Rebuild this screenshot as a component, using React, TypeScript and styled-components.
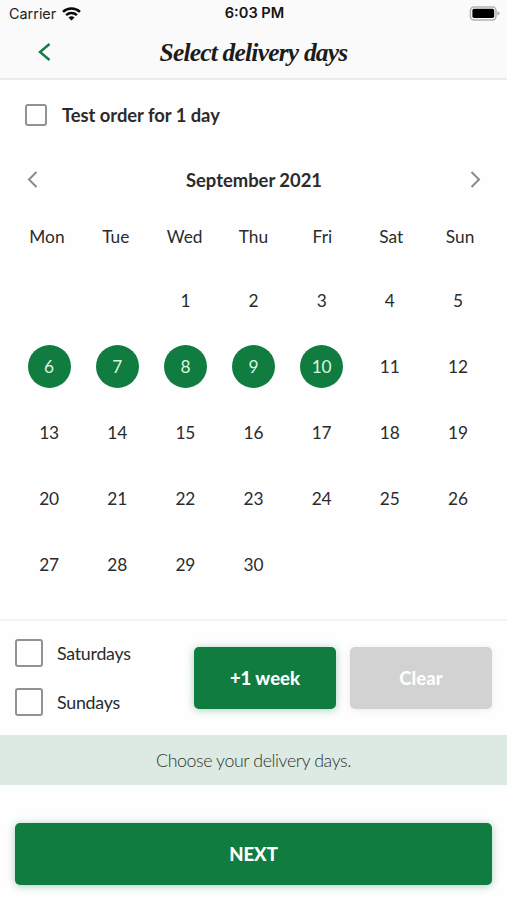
import React from "react";
import styled, { createGlobalStyle } from "styled-components";

const GlobalStyle = createGlobalStyle`
  * { box-sizing: border-box; }
  body { margin: 0; background: #fefefe; }
  button { font: inherit; border: 0; padding: 0; background: none; }
`;

const GREEN = "#107c3f";

const Screen = styled.div`
  width: 507px;
  height: 900px;
  display: flex;
  flex-direction: column;
  overflow: hidden;
  background: #fefefe;
  color: #2b2b2b;
  font-family: Lato, sans-serif;
  font-size: 18px;
`;

const Header = styled.header`
  height: 80px;
  flex: none;
  background: #fafafa;
  border-bottom: 2px solid #ebebeb;
`;

const StatusBar = styled.div`
  height: 27px;
  display: grid;
  grid-template-columns: 1fr auto 1fr;
  align-items: center;
  padding: 0 7px 0 9px;
  font: 14.4px/27px Inter, sans-serif;
  color: #222;
`;

const Carrier = styled.div`
  height: 27px;
  display: flex;
  align-items: center;
  gap: 6px;
`;

const Clock = styled.div`
  height: 27px;
  font-weight: 600;
  font-size: 14.6px;
  color: #151515;
`;

const BatteryIcon = styled.svg`
  justify-self: end;
`;

const NavBar = styled.div`
  height: 50px;
  display: grid;
  grid-template-columns: 60px 1fr 60px;
  align-items: center;
`;

const BackButton = styled.button`
  display: flex;
  padding-left: 38px;
`;

const Title = styled.h1`
  margin: 0;
  text-align: center;
  white-space: nowrap;
  font: italic 700 25.5px/49px "Liberation Serif", serif;
  letter-spacing: -0.8px;
  color: #1c1c1c;
`;

const TestOrder = styled.label`
  height: 70px;
  display: flex;
  align-items: center;
  gap: 15px;
  padding-left: 25px;
  font-weight: 700;
  font-size: 18.4px;
  letter-spacing: -0.04px;
`;

const Box = styled.span<{ $size: number }>`
  width: ${(p) => p.$size}px;
  height: ${(p) => p.$size}px;
  flex: none;
  border: 2px solid #929292;
  border-radius: 3px;
`;

const MonthBar = styled.div`
  height: 59px;
  display: flex;
  align-items: center;
  justify-content: space-between;
  padding: 0 26px 0 27px;
`;

const MonthName = styled.h2`
  margin: 0;
  font-size: 18.4px;
  font-weight: 700;
`;

const ArrowButton = styled.button`
  display: flex;
`;

const Weekdays = styled.div`
  height: 58px;
  display: grid;
  grid-template-columns: repeat(7, 1fr);
  align-items: start;
  justify-items: center;
  padding: 0 12.5px;
  font-size: 17.3px;
  line-height: 55px;
`;

const Days = styled.div`
  height: 352px;
  flex: none;
  display: grid;
  grid-template-columns: repeat(7, 1fr);
  grid-auto-rows: 66.2px;
  align-items: center;
  justify-items: center;
  padding: 0 15px;
`;

const Day = styled.span<{ $selected: boolean; $column?: number }>`
  width: 43px;
  height: 43px;
  display: flex;
  align-items: center;
  justify-content: center;
  border-radius: 50%;
  font-size: 17.3px;
  letter-spacing: -0.1px;
  grid-column: ${(p) => p.$column ?? "auto"};
  color: ${(p) => (p.$selected ? "#dcf5e0" : "inherit")};
  background: ${(p) => (p.$selected ? GREEN : "transparent")};
`;

const Controls = styled.section`
  height: 116px;
  flex: none;
  display: grid;
  grid-template-columns: 165px 142px 142px;
  justify-content: space-between;
  align-items: center;
  padding: 0 15px;
  border-top: 2px solid #f3f3f3;
`;

const WeekendOptions = styled.div`
  display: flex;
  flex-direction: column;
  gap: 21px;
  padding-bottom: 2px;
`;

const Option = styled.label`
  height: 28px;
  display: flex;
  align-items: center;
  gap: 14px;
  font-size: 17.8px;
  letter-spacing: -0.25px;
`;

const Button = styled.button<{ $disabled?: boolean }>`
  width: 100%;
  height: 62px;
  border-radius: 5px;
  font-family: Lato, sans-serif;
  font-size: 18.5px;
  font-weight: 900;
  color: #fdfdfd;
  background: ${(p) => (p.$disabled ? "#d2d2d2" : GREEN)};
  box-shadow: 0 1px 8px ${(p) => (p.$disabled ? "rgba(0,0,0,.07)" : "rgba(16,124,63,.36)")};
`;

const Notice = styled.div`
  height: 50px;
  flex: none;
  display: flex;
  align-items: center;
  justify-content: center;
  background: #dceae3;
  color: #2c3530;
  font-size: 17.8px;
  font-weight: 300;
  letter-spacing: -0.4px;
`;

const Footer = styled.footer`
  padding: 38px 15px 0;
`;

const weekdays = ["Mon", "Tue", "Wed", "Thu", "Fri", "Sat", "Sun"];
const days = Array.from({ length: 30 }, (_, i) => i + 1);

function Chevron({ color, width, height, stroke, right }: {
  color: string; width: number; height: number; stroke: number; right?: boolean;
}) {
  return (
    <svg width={width} height={height} viewBox={`0 0 ${width} ${height}`} fill="none" stroke={color} strokeWidth={stroke}>
      <path d={right
        ? `M1.5 1L${width - 2} ${height / 2}L1.5 ${height - 1}`
        : `M${width - 1.5} 1L2 ${height / 2}L${width - 1.5} ${height - 1}`} />
    </svg>
  );
}

export default function App() {
  return (
    <Screen>
      <GlobalStyle />
      <Header>
        <StatusBar>
          <Carrier>
            Carrier
            <svg width="19" height="14" viewBox="0 0 19 14" fill="none" stroke="#080808" strokeWidth="2.5">
              <path d="M1 4.8C5.8.3 13.2.3 18 4.8" />
              <path d="M4.1 8.1C7.2 5.3 11.8 5.3 14.9 8.1" />
              <path d="M9.5 13.4L6.5 10.4C8.2 8.9 10.8 8.9 12.5 10.4Z" fill="#080808" stroke="none" />
            </svg>
          </Carrier>
          <Clock>6:03 PM</Clock>
          <BatteryIcon width="31" height="15" viewBox="0 0 31 15">
            <rect x="1.4" y=".9" width="25.6" height="13" rx="3.6" fill="#fafafa" stroke="#b2b2b2" strokeWidth="1.5" />
            <rect x="3.4" y="2.8" width="21.8" height="9.2" rx="1.8" fill="#000" />
            <path d="M28.4 5.2Q30.5 5.8 30.5 7.4T28.4 9.6Z" fill="#aaa" />
          </BatteryIcon>
        </StatusBar>
        <NavBar>
          <BackButton aria-label="Back">
            <Chevron color={GREEN} width={13} height={18} stroke={2.4} />
          </BackButton>
          <Title>Select delivery days</Title>
        </NavBar>
      </Header>

      <TestOrder><Box $size={22} />Test order for 1 day</TestOrder>

      <MonthBar>
        <ArrowButton aria-label="Previous month">
          <Chevron color="#8a8a8a" width={11} height={17} stroke={2} />
        </ArrowButton>
        <MonthName>September 2021</MonthName>
        <ArrowButton aria-label="Next month">
          <Chevron color="#8a8a8a" width={11} height={17} stroke={2} right />
        </ArrowButton>
      </MonthBar>

      <Weekdays>{weekdays.map((d) => <span key={d}>{d}</span>)}</Weekdays>
      <Days>
        {days.map((d) => (
          <Day key={d} $selected={d >= 6 && d <= 10} $column={d === 1 ? 3 : undefined}>{d}</Day>
        ))}
      </Days>

      <Controls>
        <WeekendOptions>
          <Option><Box $size={28} />Saturdays</Option>
          <Option><Box $size={28} />Sundays</Option>
        </WeekendOptions>
        <Button>+1 week</Button>
        <Button $disabled>Clear</Button>
      </Controls>

      <Notice>Choose your delivery days.</Notice>
      <Footer><Button>NEXT</Button></Footer>
    </Screen>
  );
}
